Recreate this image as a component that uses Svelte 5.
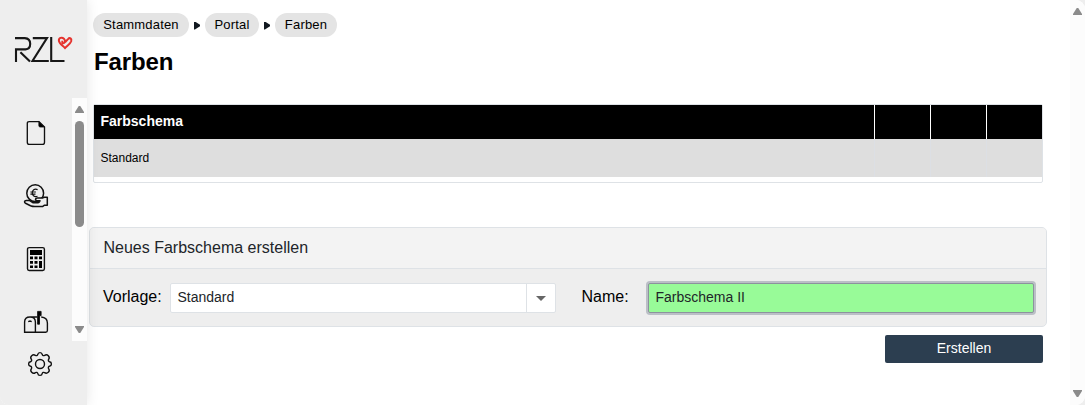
<script>
  const crumbs = [
    { label: 'Stammdaten', width: 96 },
    { label: 'Portal', width: 54 },
    { label: 'Farben', width: 62 }
  ];
  let template = $state('Standard');
  let name = $state('Farbschema II');
</script>

<div class="app">
  <aside class="sidebar">
    <svg class="logo" width="60" height="28" viewBox="0 0 60 28" fill="none">
      <path d="M2 26V13.4H11.5Q16.2 13.1 16.2 7.8T10.8 2.1H1M6.4 16.2L16 25.6M18.8 2.1H33L18.5 25H34.8M37.2 1V25H50.5" stroke="#171717" stroke-width="2.1" />
      <path d="M51 6.3L54 3.1C55.7 1.1 58 2.6 57.2 5.3C56.4 7.7 53.6 9.4 51 12.1C48.6 9.6 45.4 7.7 44.9 4.8C44.5 1.6 48 .8 49.9 2.7C51.6 4.6 51 7.3 49.4 7.3C48.2 7.3 47.8 5.9 48.7 4.9" stroke="#e5322d" stroke-width="2" />
    </svg>
    <div class="nav-scroll">
      <nav>
        <svg width="24" height="26" viewBox="0 0 24 26" fill="none" stroke="#111" stroke-width="1.35">
          <path d="M5.1 1.6H15L20.5 7.1V22.2Q20.5 24.4 18.3 24.4H5.4Q3.3 24.4 3.3 22.2V3.5Q3.3 1.6 5.1 1.6Z" />
          <path d="M14.8 1.6V5.6Q14.8 7.1 16.3 7.1H20.5Z" fill="#000" stroke-width=".7" />
        </svg>
        <svg width="26" height="26" viewBox="0 0 26 26" fill="none" stroke="#111" stroke-width="1.5" stroke-linejoin="round">
          <circle cx="12.2" cy="10.2" r="8.4" />
          <path d="M14.6 6.6C11.4 5.3 9.3 7.3 9.3 10S11.5 14.4 14.5 13.2M7.4 9H12.9M7.4 11.1H12.5" stroke-width="1.2" />
          <path d="M6.3 17.4H3.2C1.3 17.5 1 19.3 2.5 20.3L7.5 22.7Q9.5 23.6 12 23.6H19.5L21.5 22.2H24.3V14.2H21.5L19.8 14.9H14.2C12 15.1 12 17.3 13.8 17.6L17 17.8C16.6 19.4 15.4 19.8 13.5 19.8H10.2Z" fill="#eee" />
        </svg>
        <svg width="24" height="26" viewBox="0 0 24 26">
          <rect x="3.5" y="1.6" width="16.9" height="22.9" rx="1.7" fill="none" stroke="#111" stroke-width="1.4" />
          <path fill="#000" d="M6 4h12v5H6zM6 10.5h3v2.7H6zm4.5 0h3v2.7h-3zm4.5 0h3v2.7h-3zM6 15h3v2.7H6zm4.5 0h3v2.7h-3zM6 19.4h3v2.7H6zm4.5 0h3v2.7h-3zM15 15h3v7.1h-3z" />
        </svg>
        <svg width="26" height="26" viewBox="0 0 26 26" fill="none" stroke="#111" stroke-width="1.4">
          <path d="M1.6 23.3V13Q1.6 8 7 8Q12.4 8 12.4 13V23.3ZM7 8H14.5M18.2 8C22.7 8.4 24.4 10.3 24.4 14V21.6Q24.4 23.3 22.7 23.3H1.6M5.2 12.6L7 12L8.7 12.6" />
          <path d="M14.6 2.4h3.5v4.3h-1.6v8.5h-1.9z" fill="#000" stroke-width=".9" />
        </svg>
      </nav>
      <div class="bar">
        <i class="up"></i><span class="thumb"></span><i class="down"></i>
      </div>
    </div>
    <svg class="gear" width="26" height="26" viewBox="0 0 26 26" fill="none" stroke="#111" stroke-width="1.4" stroke-linejoin="round">
      <path d="M10.8 3.5Q11 1.6 13 1.6T15.2 3.5Q16 5.2 17.6 4.4Q19.6 2.9 21.3 4.7T21.6 8.4Q20.8 9.9 22.5 10.8Q24.4 11 24.4 13T22.5 15.2Q20.8 16 21.6 17.6Q23.1 19.6 21.3 21.3T17.6 21.6Q15.9 20.8 15.2 22.5Q15 24.4 13 24.4T10.8 22.5Q10 20.8 8.4 21.6Q6.4 23.1 4.7 21.3T4.4 17.6Q5.2 16 3.5 15.2Q1.6 15 1.6 13T3.5 10.8Q5.2 10 4.4 8.4Q2.9 6.4 4.7 4.7T8.4 4.4Q10 5.2 10.8 3.5Z" />
      <circle cx="13" cy="13" r="4.5" />
    </svg>
  </aside>

  <main>
    <div class="crumbs">
      {#each crumbs as crumb, i}
        {#if i > 0}<i class="sep"></i>{/if}
        <a style:width="{crumb.width}px">{crumb.label}</a>
      {/each}
    </div>
    <h1>Farben</h1>

    <div class="grid">
      <div class="row head"><span>Farbschema</span><span></span><span></span><span></span></div>
      <div class="row"><span>Standard</span><span></span><span></span><span></span></div>
    </div>

    <section class="panel">
      <header>Neues Farbschema erstellen</header>
      <div class="form">
        <span class="label first">Vorlage:</span>
        <div class="combo"><span>{template}</span><b><i></i></b></div>
        <span class="label second">Name:</span>
        <input bind:value={name} aria-label="Name" />
      </div>
    </section>
    <button>Erstellen</button>
  </main>

  <div class="bar page-bar"><i class="up"></i><i class="down"></i></div>
</div>

<style>
  :global(body) { background: #eee; overflow: hidden; }
  .app {
    display: flex;
    box-sizing: border-box;
    width: 1085px;
    height: 405px;
    overflow: hidden;
    border-radius: 0 9px 9px 9px;
    background: #fff;
    color: #000;
    font-family: "Liberation Sans", Arial, sans-serif;
  }
  .sidebar {
    display: flex;
    flex-direction: column;
    flex: none;
    width: 87px;
    height: 405px;
    background: #eee;
    box-shadow: 0 0 12px rgba(0, 0, 0, .1);
    z-index: 1;
  }
  svg { display: block; flex: none; overflow: visible; }
  .logo { margin: 36px 0 34px 14px; }
  .nav-scroll { display: flex; height: 243px; }
  nav {
    display: flex;
    flex-direction: column;
    align-items: center;
    gap: 37px;
    width: 72px;
    padding-top: 22px;
    box-sizing: border-box;
  }
  .gear { margin: 10px 0 0 27px; }
  .bar {
    display: flex;
    flex-direction: column;
    align-items: center;
    box-sizing: border-box;
    width: 15px;
    padding: 8px 0;
    background: #fcfcfc;
  }
  .up, .down { width: 9px; height: 7px; background: #8b8b8b; clip-path: polygon(42% 0, 58% 0, 100% 85%, 100% 100%, 0 100%, 0 85%); }
  .down { margin-top: auto; clip-path: polygon(0 0, 100% 0, 100% 15%, 58% 100%, 42% 100%, 0 15%); }
  .thumb { width: 9px; height: 106px; margin-top: 8px; border-radius: 5px; background: #8b8b8b; }
  .page-bar { width: 15px; flex: none; padding: 8px 0 8px; }
  main { width: 983px; box-sizing: border-box; padding: 13px 23px 0 2px; }
  .crumbs { display: flex; align-items: center; height: 24px; margin-left: 4px; }
  .crumbs a {
    box-sizing: border-box;
    border-radius: 12px;
    background: #e4e4e4;
    text-align: center;
    font-size: 13px;
    line-height: 23px;
    height: 24px;
    letter-spacing: .18px;
  }
  .sep { width: 6px; height: 8px; margin: 1px 5px 0; background: #111820; clip-path: polygon(0 0, 15% 0, 100% 42%, 100% 58%, 15% 100%, 0 100%); }
  h1 { margin: 11px 0 0 5px; font-size: 24px; line-height: 28px; letter-spacing: -.1px; }
  .grid {
    box-sizing: border-box;
    width: 950px;
    height: 79px;
    margin: 28px 0 0 4px;
    border: 1px solid #dee2e6;
    border-radius: 2px;
  }
  .row { display: grid; grid-template-columns: 780px 56px 56px 56px; height: 38px; background: #dedede; font-size: 12px; line-height: 38px; }
  .row span:first-child { padding-left: 6.5px; }
  .row span + span { border-left: 1px solid #dcdfe4; }
  .head { height: 34px; background: #000; color: #fff; font-size: 14px; font-weight: bold; line-height: 32px; }
  .head span + span { border-color: #fff; }
  .panel {
    box-sizing: border-box;
    width: 958px;
    height: 100px;
    margin-top: 44px;
    border: 1px solid #dee2e6;
    border-radius: 5px;
    background: #eee;
  }
  header {
    height: 40px;
    padding-left: 13.5px;
    border-bottom: 1px solid #dee2e6;
    border-radius: 4px 4px 0 0;
    background: #f3f3f3;
    color: #212529;
    font-size: 16px;
    line-height: 40px;
  }
  .form { display: flex; padding: 14px 0 0 13px; }
  .label { font-size: 16px; line-height: 28px; }
  .first { width: 67px; }
  .second { width: 66.5px; margin-left: 25.5px; }
  .combo, input {
    box-sizing: border-box;
    width: 386px;
    height: 30px;
    border: 1px solid #dee2e6;
    border-radius: 2px;
    background: #fff;
    color: #212529;
    font: 14px/28px "Liberation Sans", Arial, sans-serif;
  }
  .combo { display: flex; justify-content: space-between; padding-left: 6.5px; line-height: 26px; }
  .combo b { display: flex; align-items: center; justify-content: center; width: 28px; border-left: 1px solid #dee2e6; }
  .combo i { border: 5px solid transparent; border-top-color: #666; border-bottom: 0; margin-top: 1px; }
  input {
    padding: 0 6.5px 2px;
    border-color: #8c929d;
    background: #98fb98;
    box-shadow: 0 0 0 2px #bbbfc6;
    outline: none;
  }
  button {
    display: block;
    width: 158px;
    height: 28px;
    margin: 8px 0 0 796px;
    padding: 0 0 2px;
    border: 0;
    border-radius: 2px;
    background: #2c3e50;
    color: #fff;
    font: 14px "Liberation Sans", Arial, sans-serif;
  }
</style>
